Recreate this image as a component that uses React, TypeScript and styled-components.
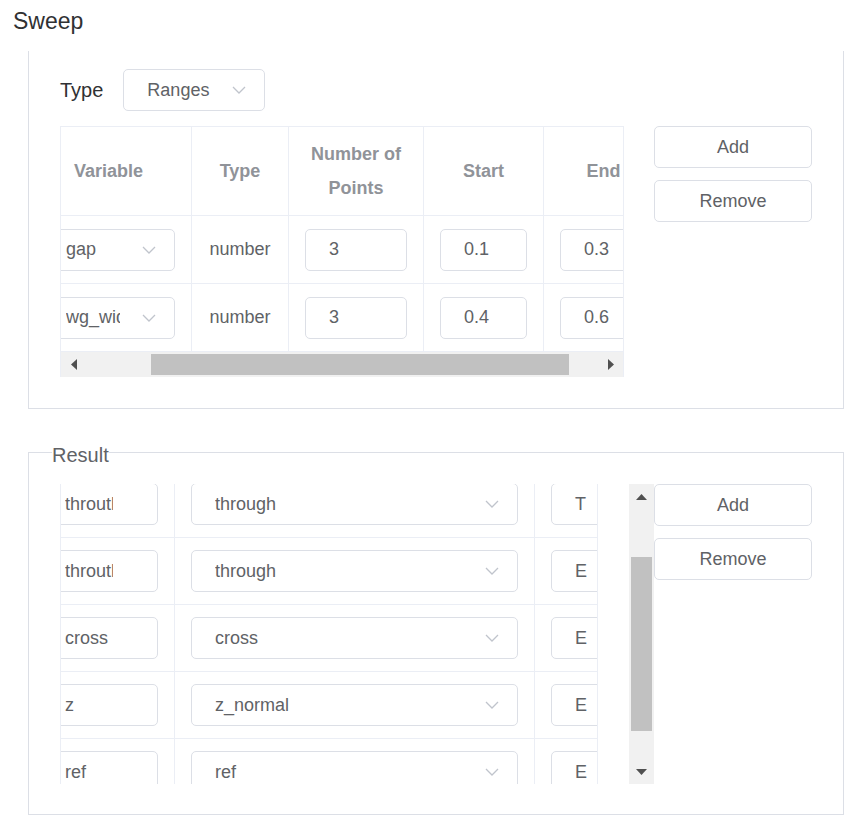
import { Fragment } from "react";
import styled, { createGlobalStyle } from "styled-components";

const GlobalStyle = createGlobalStyle`
  * {
    box-sizing: border-box;
  }
  body {
    margin: 0;
    background: #fff;
    font-family: "Liberation Sans", Arial, sans-serif;
    color: #606266;
  }
`;

const Page = styled.div`
  width: 850px;
  padding-top: 10px;
`;

const Title = styled.h2`
  margin: 0 0 18px 13px;
  font-size: 23px;
  line-height: 23px;
  font-weight: normal;
  color: #303133;
`;

const SweepPanel = styled.div`
  margin-left: 28px;
  width: 816px;
  border: 1px solid #dcdfe6;
  border-top: none;
  padding: 18px 30px 31px 31px;
`;

const TypeRow = styled.div`
  display: flex;
  align-items: center;
  height: 42px;
  margin-bottom: 15px;
`;

const Label = styled.span`
  font-size: 20px;
  color: #303133;
  margin-right: 20px;
`;

const Body = styled.div<{ $gap: number }>`
  display: flex;
  align-items: flex-start;
  gap: ${(p) => p.$gap}px;
`;

const TableFrame = styled.div`
  width: 564px;
  border: 1px solid #ebeef5;
  border-bottom: none;
  overflow: hidden;
`;

// the table is scrolled sideways a little, as in the screenshot
const RangeGrid = styled.div`
  display: grid;
  grid-template-columns: 166px 97px 135px 120px 120px;
  width: 638px;
  margin-left: -35px;
`;

const HeadCell = styled.div`
  height: 89px;
  padding: 0 12px;
  display: flex;
  align-items: center;
  justify-content: center;
  text-align: center;
  border-right: 1px solid #ebeef5;
  border-bottom: 1px solid #ebeef5;
  font-size: 18px;
  font-weight: bold;
  line-height: 34px;
  color: #909399;
`;

const Cell = styled.div<{ $height?: number }>`
  height: ${(p) => p.$height ?? 68}px;
  padding: 0 16px;
  display: flex;
  align-items: center;
  justify-content: center;
  border-right: 1px solid #ebeef5;
  border-bottom: 1px solid #ebeef5;
  font-size: 18px;
  color: #606266;
  white-space: nowrap;
`;

const Select = styled.div<{ $width?: number }>`
  width: ${(p) => (p.$width ? `${p.$width}px` : "100%")};
  flex: ${(p) => (p.$width ? "none" : "1")};
  height: 42px;
  border: 1px solid #dcdfe6;
  border-radius: 5px;
  background: #fff;
  display: flex;
  align-items: center;
  padding: 0 18px 0 23px;
  font-size: 18px;
  color: #606266;
`;

const SelectValue = styled.span<{ $gap?: number }>`
  flex: 1;
  overflow: hidden;
  white-space: nowrap;
  margin-right: ${(p) => p.$gap ?? 0}px;
`;

const TextInput = styled.div`
  flex: 1;
  height: 42px;
  border: 1px solid #dcdfe6;
  border-radius: 5px;
  background: #fff;
  display: flex;
  align-items: center;
  padding-left: 23px;
  font-size: 18px;
  color: #606266;
  overflow: hidden;
  white-space: nowrap;
`;

const Clipped = styled.span<{ $width: number }>`
  display: block;
  width: ${(p) => p.$width}px;
  overflow: hidden;
  white-space: nowrap;
`;

const ButtonColumn = styled.div`
  display: flex;
  flex-direction: column;
  gap: 12px;
  width: 158px;
`;

const Button = styled.button`
  height: 42px;
  width: 100%;
  border: 1px solid #dcdfe6;
  border-radius: 5px;
  background: #fff;
  font-family: "Liberation Sans", Arial, sans-serif;
  font-size: 18px;
  color: #606266;
  cursor: pointer;
`;

const HScrollbar = styled.div`
  height: 25px;
  background: #f1f1f1;
  display: flex;
  align-items: center;
`;

const VScrollbar = styled.div`
  width: 25px;
  height: 300px;
  background: #f1f1f1;
  display: flex;
  flex-direction: column;
  align-items: center;
`;

const ArrowBox = styled.div`
  width: 25px;
  height: 25px;
  flex: none;
  display: flex;
  align-items: center;
  justify-content: center;
`;

const HTrack = styled.div`
  flex: 1;
  height: 21px;
`;

const HThumb = styled.div<{ $start: number; $size: number }>`
  margin-left: ${(p) => p.$start}px;
  width: ${(p) => p.$size}px;
  height: 21px;
  background: #c1c1c1;
`;

const VTrack = styled.div`
  flex: 1;
  width: 21px;
`;

const VThumb = styled.div<{ $start: number; $size: number }>`
  margin-top: ${(p) => p.$start}px;
  height: ${(p) => p.$size}px;
  width: 21px;
  background: #c1c1c1;
`;

const ResultSet = styled.fieldset`
  margin: 29px 0 0 28px;
  width: 816px;
  min-inline-size: auto;
  border: 1px solid #dcdfe6;
  padding: 17px 30px 30px 31px;
`;

const Legend = styled.legend`
  margin-left: -8px;
  padding: 6px 0 0;
  font-size: 20px;
  color: #606266;
`;

const ResultScroll = styled.div`
  display: flex;
  width: 594px;
  height: 300px;
`;

const ResultFrame = styled.div`
  width: 538px;
  height: 300px;
  margin-right: 31px;
  border-left: 1px solid #ebeef5;
  border-right: 1px solid #ebeef5;
  overflow: hidden;
`;

const ResultGrid = styled.div`
  display: grid;
  grid-template-columns: 150px 360px 160px;
  width: 670px;
  margin: -13px 0 0 -36px;
`;

function Chevron() {
  return (
    <svg width="14" height="8" viewBox="0 0 14 8">
      <polyline points="1,1 7,7 13,1" fill="none" stroke="#c0c4cc" strokeWidth="1.3" />
    </svg>
  );
}

type Dir = "left" | "right" | "up" | "down";

const arrowPoints: Record<Dir, string> = {
  left: "6,0 6,11 0,5.5",
  right: "0,0 0,11 6,5.5",
  up: "0,6 11,6 5.5,0",
  down: "0,0 11,0 5.5,6",
};

function Arrow({ dir }: { dir: Dir }) {
  const flat = dir === "up" || dir === "down";
  return (
    <ArrowBox>
      <svg width={flat ? 11 : 6} height={flat ? 6 : 11}>
        <polygon points={arrowPoints[dir]} fill="#505050" />
      </svg>
    </ArrowBox>
  );
}

const ranges = [
  { name: "gap", type: "number", points: "3", start: "0.1", end: "0.3" },
  { name: "wg_width", type: "number", points: "3", start: "0.4", end: "0.6" },
];

const results = [
  { name: "throuth", field: "through", comp: "T" },
  { name: "throuth", field: "through", comp: "E" },
  { name: "cross", field: "cross", comp: "E" },
  { name: "z", field: "z_normal", comp: "E" },
  { name: "ref", field: "ref", comp: "E" },
];

export default function App() {
  return (
    <Page>
      <GlobalStyle />
      <Title>Sweep</Title>

      <SweepPanel>
        <TypeRow>
          <Label>Type</Label>
          <Select $width={142}>
            <SelectValue>Ranges</SelectValue>
            <Chevron />
          </Select>
        </TypeRow>

        <Body $gap={30}>
          <TableFrame>
            <RangeGrid>
              <HeadCell>Variable</HeadCell>
              <HeadCell>Type</HeadCell>
              <HeadCell>
                Number of
                <br />
                Points
              </HeadCell>
              <HeadCell>Start</HeadCell>
              <HeadCell>End</HeadCell>
              {ranges.map((r) => (
                <Fragment key={r.name}>
                  <Cell>
                    <Select>
                      <SelectValue $gap={22}>{r.name}</SelectValue>
                      <Chevron />
                    </Select>
                  </Cell>
                  <Cell>{r.type}</Cell>
                  <Cell>
                    <TextInput>{r.points}</TextInput>
                  </Cell>
                  <Cell>
                    <TextInput>{r.start}</TextInput>
                  </Cell>
                  <Cell>
                    <TextInput>{r.end}</TextInput>
                  </Cell>
                </Fragment>
              ))}
            </RangeGrid>
            <HScrollbar>
              <Arrow dir="left" />
              <HTrack>
                <HThumb $start={65} $size={418} />
              </HTrack>
              <Arrow dir="right" />
            </HScrollbar>
          </TableFrame>

          <ButtonColumn>
            <Button>Add</Button>
            <Button>Remove</Button>
          </ButtonColumn>
        </Body>
      </SweepPanel>

      <ResultSet>
        <Legend>Result</Legend>
        <Body $gap={0}>
          <ResultScroll>
            <ResultFrame>
              <ResultGrid>
                {results.map((r, i) => (
                  <Fragment key={i}>
                    <Cell $height={67}>
                      <TextInput>
                        <Clipped $width={48}>{r.name}</Clipped>
                      </TextInput>
                    </Cell>
                    <Cell $height={67}>
                      <Select>
                        <SelectValue>{r.field}</SelectValue>
                        <Chevron />
                      </Select>
                    </Cell>
                    <Cell $height={67}>
                      <TextInput>{r.comp}</TextInput>
                    </Cell>
                  </Fragment>
                ))}
              </ResultGrid>
            </ResultFrame>
            <VScrollbar>
              <Arrow dir="up" />
              <VTrack>
                <VThumb $start={48} $size={174} />
              </VTrack>
              <Arrow dir="down" />
            </VScrollbar>
          </ResultScroll>

          <ButtonColumn>
            <Button>Add</Button>
            <Button>Remove</Button>
          </ButtonColumn>
        </Body>
      </ResultSet>
    </Page>
  );
}
